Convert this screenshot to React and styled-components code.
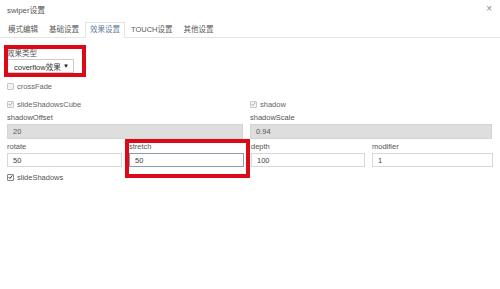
import React from "react";
import styled, { createGlobalStyle } from "styled-components";

const GlobalStyle = createGlobalStyle`
  html, body {
    margin: 0;
    padding: 0;
    background: #fff;
  }
  body {
    font-family: "Liberation Sans", Arial, "Noto Sans CJK SC", sans-serif;
    font-size: 7.5px;
    color: #555;
  }
`;

const Page = styled.div`
  position: relative;
  width: 500px;
  height: 289px;
  overflow: hidden;
`;

const Header = styled.div`
  display: flex;
  justify-content: space-between;
  align-items: center;
  height: 18px;
  padding: 0 8px 0 7px;
`;

const Title = styled.div`
  font-size: 7.8px;
  color: #555;
`;

const Close = styled.div`
  font-size: 10px;
  color: #888;
  line-height: 1;
`;

const TabBar = styled.div`
  display: flex;
  margin-top: 4px;
  padding-left: 3px;
  height: 15px;
  border-bottom: 1px solid #e4e4e4;
`;

const Tab = styled.div`
  padding: 0 4px;
  margin-right: 1px;
  box-sizing: border-box;
  line-height: 13px;
  height: ${(p) => (p.$active ? "16px" : "15px")};
  color: ${(p) => (p.$active ? "#5f7d99" : "#5a5a5a")};
  border: 1px solid ${(p) => (p.$active ? "#e4e4e4" : "transparent")};
  border-bottom: ${(p) => (p.$active ? "1px solid #fff" : "none")};
  background: #fff;
`;

const Content = styled.div`
  padding: 0 8px 0 7px;
`;

const Label = styled.div`
  line-height: 10px;
  height: 10px;
  color: #555;
  white-space: nowrap;
`;

const TypeField = styled.div`
  margin-top: 11px;
`;

const Select = styled.div`
  display: flex;
  align-items: center;
  justify-content: space-between;
  box-sizing: border-box;
  width: 67px;
  height: 14px;
  padding: 0 4px 0 6px;
  border: 1px solid #ccc;
  background: #fff;
  color: #333;
`;

const Arrow = styled.span`
  font-size: 6px;
  color: #222;
`;

const CheckRow = styled.label`
  display: flex;
  align-items: center;
  height: 10px;
  margin-top: ${(p) => p.$top}px;
  color: ${(p) => (p.$muted ? "#666" : "#555")};
`;

const Box = styled.span`
  display: inline-flex;
  align-items: center;
  justify-content: center;
  width: 7px;
  height: 7px;
  margin-right: 3px;
  box-sizing: border-box;
  border: 1px solid ${(p) => (p.$dark ? "#888" : "#c8c8c8")};
  background: #f3f3f3;
  border-radius: 1px;
`;

const Cols2 = styled.div`
  display: grid;
  grid-template-columns: 236px 242px;
  column-gap: 7px;
  margin-top: ${(p) => p.$top}px;
`;

const Cols4 = styled.div`
  display: grid;
  grid-template-columns: 115px 115px 114px 121px;
  column-gap: 7px;
  margin-top: ${(p) => p.$top}px;
`;

const Field = styled.div`
  display: flex;
  flex-direction: column;
`;

const Input = styled.div`
  box-sizing: border-box;
  height: ${(p) => p.$h}px;
  margin-top: 1px;
  padding-left: 5px;
  display: flex;
  align-items: center;
  border: 1px solid ${(p) => (p.$focus ? "#8e9ba8" : p.$disabled ? "#d4d4d4" : "#d8d8d8")};
  background: ${(p) => (p.$disabled ? "#dedede" : "#fff")};
  color: ${(p) => (p.$disabled ? "#555" : "#444")};
`;

const Annotation = styled.div`
  position: absolute;
  box-sizing: border-box;
  border: 4px solid #dc0a17;
  pointer-events: none;
`;

const Check = ({ on, dark }) => (
  <Box $dark={dark}>
    {on && (
      <svg width="6" height="6" viewBox="0 0 6 6">
        <path d="M0.8 3.2 L2.3 4.7 L5.2 1.2" fill="none" stroke={dark ? "#333" : "#a0a0a0"} strokeWidth="1.1" />
      </svg>
    )}
  </Box>
);

const tabs = ["模式编辑", "基础设置", "效果设置", "TOUCH设置", "其他设置"];

export default function App() {
  return (
    <Page>
      <GlobalStyle />
      <Header>
        <Title>swiper设置</Title>
        <Close>×</Close>
      </Header>
      <TabBar>
        {tabs.map((t, i) => (
          <Tab key={t} $active={i === 2}>{t}</Tab>
        ))}
      </TabBar>
      <Content>
        <TypeField>
          <Label>效果类型</Label>
          <Select>
            <span>coverflow效果</span>
            <Arrow>▼</Arrow>
          </Select>
        </TypeField>
        <CheckRow $top={8} $muted>
          <Check />
          crossFade
        </CheckRow>
        <Cols2 $top={8}>
          <CheckRow $top={0} $muted>
            <Check on />
            slideShadowsCube
          </CheckRow>
          <CheckRow $top={0} $muted>
            <Check on />
            shadow
          </CheckRow>
        </Cols2>
        <Cols2 $top={4}>
          <Field>
            <Label>shadowOffset</Label>
            <Input $h={15} $disabled>20</Input>
          </Field>
          <Field>
            <Label>shadowScale</Label>
            <Input $h={15} $disabled>0.94</Input>
          </Field>
        </Cols2>
        <Cols4 $top={3}>
          <Field>
            <Label>rotate</Label>
            <Input $h={14}>50</Input>
          </Field>
          <Field>
            <Label>stretch</Label>
            <Input $h={14} $focus>50</Input>
          </Field>
          <Field>
            <Label>depth</Label>
            <Input $h={14}>100</Input>
          </Field>
          <Field>
            <Label>modifier</Label>
            <Input $h={14}>1</Input>
          </Field>
        </Cols4>
        <CheckRow $top={5}>
          <Check on dark />
          slideShadows
        </CheckRow>
      </Content>
      <Annotation style={{ left: 4, top: 45, width: 82, height: 32 }} />
      <Annotation style={{ left: 125, top: 139, width: 125, height: 39 }} />
    </Page>
  );
}
